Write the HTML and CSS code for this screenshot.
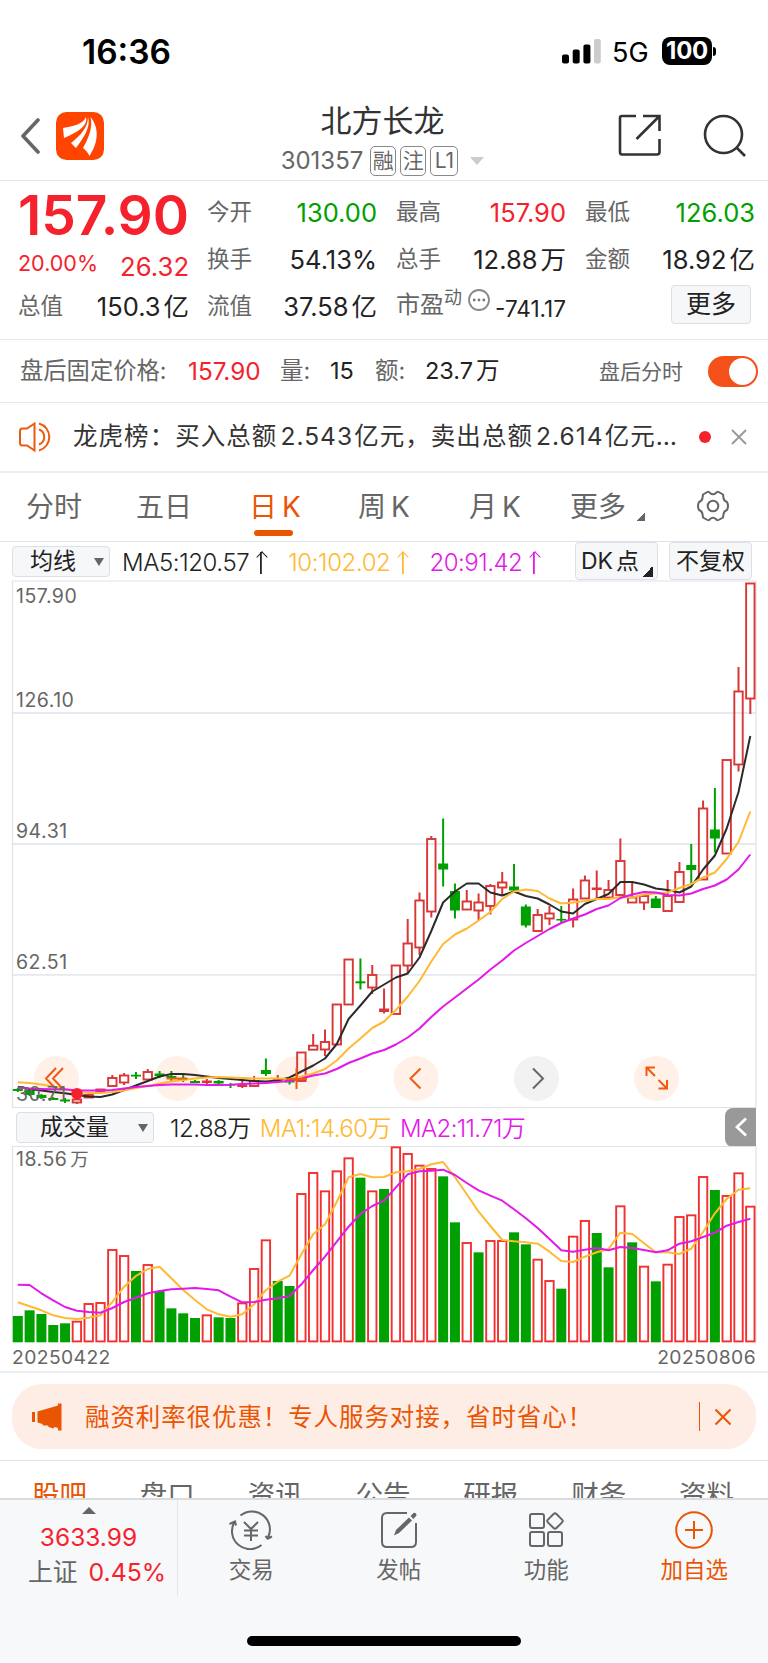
FILE: index.html
```html
<!DOCTYPE html>
<html lang="zh-CN">
<head>
<meta charset="utf-8">
<title>北方长龙 301357</title>
<link rel="stylesheet" href="styles.css">
</head>
<body>
<div class="status">
  <span class="clock">16:36</span>
  <div class="status-right">
    <svg width="39" height="25" viewBox="0 0 39 25"><rect x="0" y="15.500" width="7" height="9" rx="2"/><rect x="10.700" y="10.500" width="7" height="14" rx="2"/><rect x="21.400" y="5.500" width="7" height="19" rx="2"/><rect x="32" y="0" width="6.800" height="24.500" rx="2" fill="#ccc"/></svg>
    <span class="net">5G</span>
    <span class="battery">100</span><i class="nub"></i>
  </div>
</div>

<header class="header">
  <div class="header-left">
    <svg width="22" height="36" viewBox="0 0 22 36" fill="none" stroke="#666" stroke-width="3.600" stroke-linecap="round" stroke-linejoin="round"><path d="M18 2 3 18 18 34"/></svg>
    <svg class="logo" width="48" height="48" viewBox="0 0 48 48"><rect width="48" height="48" rx="10.500" fill="#ff4400"/><g fill="#fff"><path d="M7 16C18 14 27 12 30 5c2 8-6 14-22 21z"/><path d="M32 5c3 10-4 20-12 31L15 31C25 23 32 15 32 5z"/><path d="M34.500 5C42 14 44 28 33.500 44c-2-4-4-6-6.500-8C33 25 37 15 34.500 5z"/></g></svg>
  </div>
  <div class="header-mid">
    <h1 class="name">北方长龙</h1>
    <div class="code-row"><span class="code">301357</span><span class="tag">融</span><span class="tag">注</span><span class="tag tag-l1">L1</span><i class="tri-down tri-light"></i></div>
  </div>
  <div class="header-right">
    <svg width="44" height="44" viewBox="0 0 44 44" fill="none" stroke="#333" stroke-width="2.600"><path d="M18 2H4Q2 2 2 4V38Q2 40.500 4 40.500H39Q41.500 40.500 41.500 38V25M25 2H41.500V17M41.500 2 18.500 25"/></svg>
    <svg width="44" height="44" viewBox="0 0 44 44" fill="none" stroke="#333" stroke-width="2.600"><circle cx="20.500" cy="20.500" r="18.500"/><path d="M33 33 42 42"/></svg>
  </div>
</header>

<section class="quote">
  <div class="col">
    <div class="price">157.90</div>
    <div class="chg"><span class="pct">20.00%</span><span class="diff">26.32</span></div>
    <div class="kv"><label>总值</label><b>150.3<u>亿</u></b></div>
  </div>
  <div class="col">
    <div class="kv"><label>今开</label><b class="green">130.00</b></div>
    <div class="kv"><label>换手</label><b>54.13%</b></div>
    <div class="kv"><label>流值</label><b>37.58<u>亿</u></b></div>
  </div>
  <div class="col">
    <div class="kv"><label>最高</label><b class="red">157.90</b></div>
    <div class="kv"><label>总手</label><b>12.88<u>万</u></b></div>
    <div class="kv pe"><label>市盈<sup>动</sup></label>
      <svg width="24" height="24" viewBox="0 0 24 24" fill="none" stroke="#888" stroke-width="1.800"><circle cx="12" cy="12" r="10"/><g fill="#777" stroke="none"><circle cx="7.200" cy="12" r="1.400"/><circle cx="12" cy="12" r="1.400"/><circle cx="16.800" cy="12" r="1.400"/></g></svg>
      <b>-741.17</b></div>
  </div>
  <div class="col">
    <div class="kv"><label>最低</label><b class="green">126.03</b></div>
    <div class="kv"><label>金额</label><b>18.92<u>亿</u></b></div>
    <div class="more-wrap"><button class="btn more">更多</button></div>
  </div>
</section>

<section class="after">
  <span class="a1 grey">盘后固定价格:</span><span class="a2 red">157.90</span><span class="a3 grey">量:</span><span class="a4">15</span><span class="a5 grey">额:</span><span class="a6">23.7<u>万</u></span>
  <span class="a7 grey">盘后分时</span><i class="toggle"></i>
</section>

<section class="notice">
  <svg width="36" height="32" viewBox="0 0 36 32" fill="none" stroke="#ea5a10" stroke-width="2"><path d="M2 10Q2 7.500 4.500 7.500H9L16.500 2.500V29.500L9 24.500H4.500Q2 24.500 2 22ZM21 8.500A8 8 0 0 1 21 23.500M21 2.500A14 14 0 0 1 21 29.500"/></svg>
  <span class="notice-text">龙虎榜：买入总额<em>2.543</em>亿元，卖出总额<em>2.614</em>亿元…</span>
  <i class="dot"></i>
  <svg class="close" width="16" height="16" viewBox="0 0 16 16" stroke="#999" stroke-width="1.900"><path d="M1 1 15 15M15 1 1 15"/></svg>
</section>

<nav class="tabs">
  <span class="t1">分时</span><span class="t2">五日</span><span class="t3 on">日<em>K</em></span><span class="t4">周<em>K</em></span><span class="t5">月<em>K</em></span><span class="t6">更多</span><i class="corner"></i>
  <svg class="gear" width="34" height="34" viewBox="0 0 34 34" fill="none" stroke="#666" stroke-width="2" stroke-linejoin="round"><path d="M10.500 3.500Q13 2 14 4Q17 6.500 20 4Q21 2 23.500 3.500L27 5.500L27.500 9Q28 12 31 13Q33 17 31 21Q28 22 27.500 25L27 28.500L23.500 30.500Q21 32 20 30Q17 27.500 14 30Q13 32 10.500 30.500L7 28.500L6.500 25Q6 22 3 21Q1 17 3 13Q6 12 6.500 9L7 5.500Z"/><circle cx="17" cy="17" r="5.300"/></svg>
</nav>

<div class="bar ma-bar">
  <button class="btn sel sel-ma">均线<i class="tri-down"></i></button>
  <span class="m1">MA5:120.57</span><i class="up"></i>
  <span class="m2">10:102.02</span><i class="up orange"></i>
  <span class="m3">20:91.42</span><i class="up magenta"></i>
  <button class="btn dk">DK<u>点</u><i class="corner dark"></i></button>
  <button class="btn fq">不复权</button>
</div>
<svg class="chart" id="kline" width="768" height="528" viewBox="0 580 768 528"></svg>
<div class="bar vol-bar">
  <button class="btn sel sel-vol">成交量<i class="tri-down"></i></button>
  <span class="v1">12.88万</span><span class="v2">MA1:14.60万</span><span class="v3">MA2:11.71万</span>
  <span class="fold"><svg width="12" height="20" viewBox="0 0 12 20" fill="none" stroke="#fff" stroke-width="2.800"><path d="M11 1.500 2 10 11 18.500"/></svg></span>
</div>
<svg class="chart" id="volume" width="768" height="197" viewBox="0 1146 768 197"></svg>
<div class="dates"><span>20250422</span><span>20250806</span></div>

<div class="promo-wrap">
  <div class="promo">
    <svg width="32" height="28" viewBox="0 0 32 28" fill="#ea5504"><path d="M1 9H4V19H1ZM6.500 8.500 27 2.500V.500H30.500V27.500H27V25L23.500 24 22.500 25.500 17.500 24 17 22.500H12L11.500 21 6.500 19.500Z"/></svg>
    <span class="promo-text">融资利率很优惠！专人服务对接，省时省心！</span>
    <i class="vline"></i>
    <svg width="18" height="18" viewBox="0 0 18 18" stroke="#ea5504" stroke-width="2"><path d="M1.500 1.500 16.500 16.500M16.500 1.500 1.500 16.500"/></svg>
  </div>
</div>

<nav class="subtabs"><span class="on">股吧</span><span>盘口</span><span>资讯</span><span>公告</span><span>研报</span><span>财务</span><span>资料</span></nav>

<footer class="footer">
  <div class="dock">
    <div class="index"><i class="tri-up"></i><span class="idx-v">3633.99</span><span class="idx-n">上证<em>0.45%</em></span></div>
    <div class="item">
      <svg width="44" height="40" viewBox="0 0 44 40" fill="none" stroke="#666" stroke-width="2"><path d="M11.500 5.500A18 18 0 0 1 39 27.500M39 29 36.500 26M38 29 43 26.500M32.500 35A18 18 0 0 1 5.500 12M.500 14 6 11.500 7 15.500M15 12 22 19 29 12M22 19V31M15 20.500H29M15 25.500H29"/></svg>
      <span>交易</span></div>
    <div class="item">
      <svg width="38" height="40" viewBox="0 0 38 40" fill="none" stroke="#666" stroke-width="2"><path d="M27 3H7Q2 3 2 8V32Q2 37 7 37H31Q36 37 36 32V13"/><path fill="#666" stroke="none" d="M14 25.500 16 20 29 7.500 32 10.500 19 23ZM30.500 6 33.500 3Q35 2.500 36 3.500Q37 5 36 6L33.500 9Z"/></svg>
      <span>发帖</span></div>
    <div class="item">
      <svg width="36" height="40" viewBox="0 0 36 40" fill="none" stroke="#666" stroke-width="2"><rect x="2" y="4" width="14" height="14" rx="2"/><rect x="2" y="22" width="14" height="14" rx="2"/><rect x="20" y="22" width="14" height="14" rx="2"/><rect x="21" y="5" width="12" height="12" rx="2" transform="rotate(45 27 11)"/></svg>
      <span>功能</span></div>
    <div class="item add">
      <svg width="40" height="40" viewBox="0 0 40 40" fill="none" stroke="#ea5504" stroke-width="2"><circle cx="20" cy="20" r="17.800"/><path d="M11 20H29M20 11V29"/></svg>
      <span>加自选</span></div>
  </div>
  <i class="home"></i>
</footer>
<script src="chart.js"></script>
</body>
</html>
```
FILE: styles.css
```css
* { box-sizing: border-box; }
body { margin: 0; width: 768px; height: 1663px; overflow: hidden; display: flex; flex-direction: column; background: #fff; color: #222; font: 400 24px/1 Inter, "Noto Sans CJK SC", sans-serif; }
body > * { flex: none; }
span, b, label, em { white-space: nowrap; }
em, i { font-style: normal; }
u { text-decoration: none; margin-left: 3px; }
b { font-weight: 400; }
svg { display: block; flex: none; }
button { font: inherit; color: inherit; padding: 0; }
.red { color: #f5222d; }
.green { color: #00a000; }
.grey { color: #666; }

.status { height: 95px; padding: 0 52px 0 82px; display: flex; justify-content: space-between; align-items: center; color: #000; }
.clock { font-size: 33.500px; font-weight: 600; margin-top: 10px; }
.status-right { display: flex; align-items: center; margin-top: 7px; }
.net { font-size: 27px; margin: 2px 0 0 11px; width: 50px; }
.battery { width: 50px; height: 28px; border-radius: 8px; background: #000; color: #fff; font-size: 24px; font-weight: 700; line-height: 28px; text-align: center; letter-spacing: -.3px; }
.nub { width: 3px; height: 9px; border-radius: 0 3px 3px 0; background: #000; margin-left: 1px; }

.header { height: 86px; border-bottom: 1px solid #e4e4e4; display: flex; justify-content: space-between; padding: 0 21px 0 20px; }
.header-left, .header-right { display: flex; align-items: center; width: 240px; padding-bottom: 4px; }
.header-left { padding-bottom: 4px; width: 238px; }
.logo { margin-left: 14px; }
.header-right { justify-content: flex-end; gap: 41px; padding-bottom: 3px; }
.header-mid { display: flex; flex-direction: column; align-items: center; }
.name { margin: 10px 0 0; font-size: 31px; line-height: 32px; font-weight: 400; color: #333; }
.code-row { display: flex; align-items: center; height: 30px; margin-top: 9px; color: #666; }
.code { font-size: 24px; margin-right: 7px; }
.tag { width: 26px; height: 30px; border: 1px solid #888; border-radius: 5px; margin-right: 4px; font-size: 21px; line-height: 28px; display: flex; justify-content: center; }
.tag-l1 { width: 28px; }
.tri-down { border: 5px solid transparent; border-top: 8px solid #666; border-bottom: 0; }
.tri-light { border-width: 7px; border-top: 8px solid #ccc; border-bottom: 0; margin-left: 8px; }

.quote { height: 159px; border-bottom: 1px solid #e8e8e8; display: grid; grid-template-columns: 170px repeat(3, 170px); column-gap: 19px; padding-left: 18px; }
.col { display: grid; grid-template-rows: 47px 47px 47px; padding-top: 8px; }
.col:first-child { grid-template-rows: 54px 40px 47px; padding-right: 1px; }
.kv { display: flex; justify-content: space-between; align-items: center; font-size: 25.500px; }
.kv label { font-size: 22.500px; color: #666; }
.kv b { margin-left: -10px; }
.price { font-size: 55px; font-weight: 600; color: #f5222d; line-height: 53px; white-space: nowrap; }
.chg { display: flex; justify-content: space-between; align-items: center; color: #f5222d; }
.pct { font-size: 21.500px; padding-top: 1px; }
.diff { font-size: 25.700px; padding: 7px 0 0 0; }
.pe sup { font-size: 18px; line-height: 1; vertical-align: 9px; }
.pe svg { margin: -14px 0 0 -5px; }
.pe b { font-size: 22.500px; margin-left: -6px; padding-top: 5px; }
.pe label { margin-top: -7px; font-size: 24px; }
.btn { background: #f6f7f9; border: 1.500px solid #dcdfe5; border-radius: 4px; color: #222; display: flex; align-items: center; }
.more-wrap { display: flex; justify-content: flex-end; padding: 2px 4px 0 0; }
.more { width: 80px; height: 39px; font-size: 25px; justify-content: center; }

.after { height: 63px; border-bottom: 1px solid #e8e8e8; display: flex; align-items: center; padding: 0 10px 0 20px; font-size: 23.500px; }
.a1 { width: 168px; font-size: 23.300px; } .a2 { width: 92px; font-size: 24.300px; } .a3 { width: 50px; } .a4 { width: 45px; } .a5 { width: 50px; }
.a7 { font-size: 21px; margin-left: auto; margin-right: 25px; }
.toggle { width: 50px; height: 31px; border-radius: 16px; background: #f4511a; display: flex; justify-content: flex-end; padding: 2px; }
.toggle::after { content: ""; width: 27px; height: 27px; border-radius: 50%; background: #fff; }

.notice { height: 70px; border-bottom: 2px solid #eee; display: flex; align-items: center; padding: 0 21px 1px 18px; color: #333; }
.notice-text { font-size: 24.500px; letter-spacing: 1.050px; margin-left: 19px; }
.notice-text em { margin: 0 1px 0 3px; }
.dot { width: 12px; height: 12px; border-radius: 50%; background: #f5222d; margin-left: auto; }
.close { margin-left: 20px; }

.tabs { height: 69px; border-bottom: 1.500px solid #dfe1e8; display: flex; align-items: center; padding: 0 0 0 26px; font-size: 28px; color: #666; }
.tabs em { margin-left: 5px; }
.t1 { width: 110px; } .t2 { width: 113px; }
.t3 { width: 109px; } .t4 { width: 111px; } .t5 { width: 101px; } .t6 { width: 67px; }
.on { color: #ea5504; }
.t3 { position: relative; }
.t3::after { content: ""; position: absolute; left: 5px; top: 37px; width: 39px; height: 6px; border-radius: 3px; background: #ea5504; }
.corner { width: 8px; height: 8px; background: linear-gradient(135deg, transparent 50%, #666 50%); margin-top: 20px; }
.gear { margin-left: 51px; margin-top: -2px; }

.bar { height: 38px; display: flex; align-items: center; padding-left: 12px; }
.bar > span:not(.fold) { padding-top: 3px; font-weight: 350; }
.sel { height: 31px; font-size: 23px; justify-content: space-between; padding-top: 1px; }
.sel-ma { width: 98px; padding: 1px 5px 0 17px; }
.m1 { margin-left: 12px; letter-spacing: -.4px; }
.m2 { color: #ffb932; margin-left: 22px; letter-spacing: -.4px; }
.m3 { color: #e219e8; margin-left: 22px; letter-spacing: -.5px; }
.up { width: 10px; height: 22px; margin: 3px 0 0 7px; color: #222; background: linear-gradient(currentColor, currentColor) center / 1.800px 100% no-repeat; position: relative; }
.up::after { content: ""; position: absolute; left: 1.500px; top: 1px; width: 7px; height: 7px; border: solid currentColor; border-width: 1.800px 0 0 1.800px; transform: rotate(45deg); }
.orange { color: #ffb932; } .magenta { color: #e219e8; }
.dk { width: 83px; height: 38px; font-size: 23px; margin-left: auto; padding: 1px 0 0 5px; }
.dark { width: 11px; height: 11px; margin: 20px 0 0 3px; background: linear-gradient(135deg, transparent 50%, #222 50%); }
.fq { width: 83px; height: 38px; font-size: 23px; margin: 0 16px 0 11px; padding-top: 1px; justify-content: center; }
.chart text { font-family: Inter, "Noto Sans CJK SC", sans-serif; font-size: 19.500px; letter-spacing: .5px; fill: #666; }
.vol-bar { padding-left: 16px; }
.sel-vol { width: 138px; padding: 1px 5px 0 23px; }
.v1 { margin-left: 16px; letter-spacing: -.5px; } .v2 { margin-left: 9px; color: #ffb932; letter-spacing: -.5px; } .v3 { margin-left: 9px; color: #e219e8; letter-spacing: -.65px; }
.fold { width: 31px; height: 39px; border-radius: 8px 0 0 8px; background: #999; margin: 0 12px 0 auto; display: flex; align-items: center; justify-content: center; }
.dates { height: 30px; border-bottom: 2px solid #edeef2; padding: 5px 12px 0; display: flex; justify-content: space-between; font-size: 19.300px; letter-spacing: .4px; line-height: 19px; color: #666; }

.promo-wrap { height: 88px; border-bottom: 1px solid #e2e2e2; padding: 11px 12px; }
.promo { height: 65px; border-radius: 30px; background: #feede5; display: flex; align-items: center; padding: 0 24px 0 19px; color: #ea5504; }
.promo-text { font-size: 24.500px; letter-spacing: .900px; margin-left: 22px; padding-top: 1px; }
.vline { width: 1.500px; height: 29px; background: #ea5504; margin: 0 14px 0 auto; }

.subtabs { height: 37px; overflow: hidden; padding: 19px 34px 0 32px; display: flex; justify-content: space-between; font-size: 27.500px; line-height: 30px; color: #666; }
.subtabs .on { color: #ea5504; }

.footer { height: 165px; background: #f7f8fa; border-top: 2px solid #d9dbdf; display: flex; flex-direction: column; align-items: center; }
.dock { width: 100%; height: 96px; display: grid; grid-template-columns: 178px repeat(4, 147.500px); }
.index { border-right: 1.500px solid #e3e5e9; display: flex; flex-direction: column; align-items: center; padding-top: 7px; color: #f5222d; }
.tri-up { border: 7px solid transparent; border-bottom: 7px solid #666; border-top: 0; }
.idx-v { margin-top: 11px; font-size: 24.500px; }
.idx-n { margin-top: 10px; font-size: 24.800px; color: #666; margin-left: 17px; }
.idx-n em { margin-left: 11px; color: #f5222d; }
.item { display: flex; flex-direction: column; align-items: center; padding: 10px 1px 0 0; font-size: 22.500px; color: #666; gap: 9px; }
.add { color: #ea5504; padding-right: 0; }
.home { width: 274px; height: 10px; border-radius: 5px; background: #000; margin-top: 40px; }
```
FILE: chart.js
```javascript
const X0 = 17.8, STEP = 11.815, RED = '#d93636', GREEN = '#00a000';
const cx = i => X0 + i * STEP;

// [direction, high, low, body top, body bottom]; direction f = filled red
const candles = [
['g',1088,1092,1089,1091],['g',1089,1096,1090,1095],['g',1094,1099,1095,1098],['g',1097,1100,1098,1100],['g',1098,1103,1099.5,1101.5],
['r',1092,1104,1099.5,1102.5],['r',1094,1098,1095,1097.5],['r',1089,1093,1089.5,1091.5],['r',1075,1087,1078,1086],['r',1073,1085,1075.5,1082.5],
['g',1072,1079,1074.7,1076.5],['r',1069,1080,1072,1079.5],['g',1071,1078,1073.5,1076],['g',1071,1082,1076,1078],['g',1075,1082,1078,1080],
['g',1080,1083,1081,1083],['f',1079,1085,1080.5,1083],['g',1080,1084,1081,1083.5],['g',1083,1088,1084,1085.5],['f',1080,1088,1084.5,1087],
['r',1076,1087,1081,1086],['g',1058.5,1076,1070,1074],['f',1075,1083,1078,1080.5],['g',1079,1084.5,1080,1082.5],['r',1052,1081,1052.5,1081],
['r',1034,1050,1045.7,1049.7],['r',1029.5,1056,1042,1049.5],['r',1004,1045,1004.5,1044.5],['r',959,1005,959.5,1004.5],['g',958.5,989.5,981.3,983.3],
['r',965,994,975,987.5],['f',988.5,1013.5,1008.5,1012],['r',965,1014,965.5,1014],['r',919,973,943.5,965.5],['r',892.5,955,900.5,947.5],
['r',836,917.5,839,911.5],['g',818.5,886.5,863.5,869.5],['g',883.5,918.5,891,910.5],['r',890,910,901.5,909.5],['r',893.5,920,902.5,910.5],
['r',884,914.5,886,906],['r',872,895,882.5,887.5],['g',864,891,886.5,890.5],['g',904.5,927.5,906.5,925.5],['r',909,931,915,931],
['r',906,925,913.5,918.5],['g',906,923.5,919,920.5],['r',888.5,927.5,899.5,919.5],['r',875.5,899,880.5,898.5],['f',870.5,899,887.5,890],
['r',880,898,890,897.5],['r',838.5,896,861,895],['r',883,903,897.5,902.5],['r',896,910,896,902.5],['g',896,908,898.5,908],
['r',880,911,896,911],['r',862,902,872,902],['g',844,884,865,870],['r',800.5,880,808.5,879.5],['g',788,852.5,829.5,838.5],
['r',760,854,760,853.5],['r',667,771.5,691.5,764.5],['r',583.5,714,583.5,698.5]];

const ma5 = [1086.7,1089,1090.5,1092,1093.3,1095,1096.5,1097,1094.5,1090,1085.5,1081,1076.5,1074,1074,1075,1076.5,1078,1079,1080,1081,1081.5,1080.5,1077.5,1071.5,1065.5,1058.5,1044,1019,1005.5,991.5,984.5,977.5,973.5,957.5,931,902.5,891.5,883.5,883.5,892.5,895.5,891.5,896,898.5,904.5,911.5,913.5,904,899,894,882,882,884.5,888.5,890,892.5,886.5,869.5,855.5,828.5,792,736];
const ma10 = [1082.3,1083,1084.5,1086.5,1089,1092,1093,1093,1092,1090.5,1088,1086,1083.5,1081.5,1080,1078.5,1077.5,1077,1077.5,1078,1078.5,1078.5,1078.5,1079,1076.5,1073.5,1069,1060.5,1048.5,1038.5,1028,1021.5,1010,996.5,981,961.5,944,934.5,928.5,920.5,912,899,891.5,889.5,891,898.5,903.5,902.5,901,899,899,897,897.5,894.5,893.5,892.5,888,884,877.5,872.5,859,842,811.5];
const ma20 = [1087.5,1088.5,1089,1089.3,1089.6,1090.3,1090.6,1090.6,1090,1088.5,1087,1086,1085,1084.5,1084.5,1084.5,1085,1085,1084.7,1084,1083.5,1083,1082,1081,1078.5,1075.5,1073.5,1069,1063,1058.5,1053.5,1050,1044.5,1037.5,1028.5,1017,1006.5,997.5,988.5,979.5,969.5,960.5,950.5,943,936,929,923,918.5,914.5,909,905.5,898,894.5,892,892.5,895,895.5,893.5,889,885.5,879.5,869.5,854.5];

// bar tops, in thirds of a pixel below y = 1100
const vol = 'g648 g631 g642 g675 g670 r665 r612 r609 r450 r468 g513 r495 g573 g625 g640 g654 r646 g652 g654 r610 r507 r421 g543 g558 r282 r219 r274 r214 r175 g233 r274 g267 r142 r162 r197 r207 g229 g367 r429 g457 r423 r423 g397 g433 r479 r543 g566 r410 r363 g399 g502 r319 g427 r500 g544 r494 r351 r346 r231 g270 r288 r220 r320'.split(' ');
const vma1 = [607,619,631,646,654,657,653,646,606,560,528,507,500,535,570,600,628,643,650,643,613,570,545,527,463,403,373,305,232,222,232,231,217,214,207,193,186,232,283,335,378,420,424,427,431,455,483,486,470,457,447,398,402,430,457,457,462,446,396,340,297,269,265];
const vma2 = [554,555,580,601,621,632,636,638,624,606,593,580,573,568,566,564,567,571,590,607,606,599,595,588,553,510,470,425,380,342,318,302,262,223,214,212,209,225,249,271,287,302,328,355,384,417,451,455,449,444,451,441,444,450,457,451,431,424,411,398,377,366,356];

const line = (ys, color, w) => `<polyline fill="none" stroke="${color}" stroke-width="${w}" stroke-linejoin="round" points="${ys.map((y, i) => cx(i).toFixed(1) + ',' + y.toFixed(1)).join(' ')}"/>`;
const grid = y => `<path d="M12.500 ${y}H756" stroke="#e6e9ef" stroke-width="1.800"/>`;

let k = [713, 844, 974.8].map(y => grid(y)).join('') +
  '<path d="M12.500 1108V581H756V1108M12 1107.500H756" fill="none" stroke="#e0e2e8" stroke-width="1.200"/>';
[56.5, 177, 296.5, 416, 536.5, 656.5].forEach((x, i) => {
  k += `<circle cx="${x}" cy="1078.500" r="22.500" fill="${i === 4 ? '#f2f2f2' : '#fff0e8'}"/>`;
});
candles.forEach(([d, h, l, t, b], i) => {
  const x = cx(i), c = d === 'g' ? GREEN : RED;
  if (d === 'r') {
    k += `<path d="M${x} ${h}V${t}M${x} ${b}V${l}" stroke="${c}" stroke-width="2"/>` +
      `<rect x="${x - 4.2}" y="${t}" width="8.400" height="${b - t}" fill="none" stroke="${c}" stroke-width="1.900"/>`;
  } else {
    k += `<path d="M${x} ${h}V${l}" stroke="${c}" stroke-width="2"/><rect x="${x - 5}" y="${t}" width="10" height="${b - t}" fill="${c}"/>`;
  }
});
k += line(ma5, '#2b2b2b', 2) + line(ma10, '#ffb932', 2) + line(ma20, '#e219e8', 2);
k += '<g fill="none" stroke="#f25a10" stroke-width="2"><path d="M56 1068 46 1078.500 56 1089M63 1068 53 1078.500 63 1089M166.500 1078.500H187M296.500 1068V1089M286 1079H307M420.500 1068.500 410.500 1078.500 420.500 1088.500M655 1067.500H646.500V1076M646.500 1067.500 655 1076M658.500 1088.500H667V1080M667 1088.500 658.500 1080"/></g>' +
  '<path d="M533 1068.500 543 1078.500 533 1088.500" fill="none" stroke="#666" stroke-width="2"/>';
[['157.90', 602.5], ['126.10', 706.5], ['94.31', 837.5], ['62.51', 968.7], ['30.71', 1101]].forEach(([s, y]) => {
  k += `<text x="16" y="${y}">${s}</text>`;
});
k += '<circle cx="77" cy="1093.700" r="5.800" fill="#f5222d"/>';
document.getElementById('kline').innerHTML = k;

let v = '<path d="M12.500 1342V1146.500H756V1342" fill="none" stroke="#e0e2e8" stroke-width="1.200"/>';
vol.forEach((s, i) => {
  const y = 1100 + s.slice(1) / 3, x = cx(i);
  v += s[0] === 'g'
    ? `<rect x="${x - 5}" y="${y}" width="10" height="${1342.3 - y}" fill="${GREEN}"/>`
    : `<rect x="${x - 4.2}" y="${y}" width="8.400" height="${1341.4 - y}" fill="#fff" stroke="#f23030" stroke-width="1.900"/>`;
});
v += line(vma1.map(n => 1100 + n / 3), '#ffb932', 2) + line(vma2.map(n => 1100 + n / 3), '#e219e8', 2);
v += '<text x="16" y="1165.500">18.56<tspan dx="3" font-size="18.500">万</tspan></text>';
document.getElementById('volume').innerHTML = v;
```
